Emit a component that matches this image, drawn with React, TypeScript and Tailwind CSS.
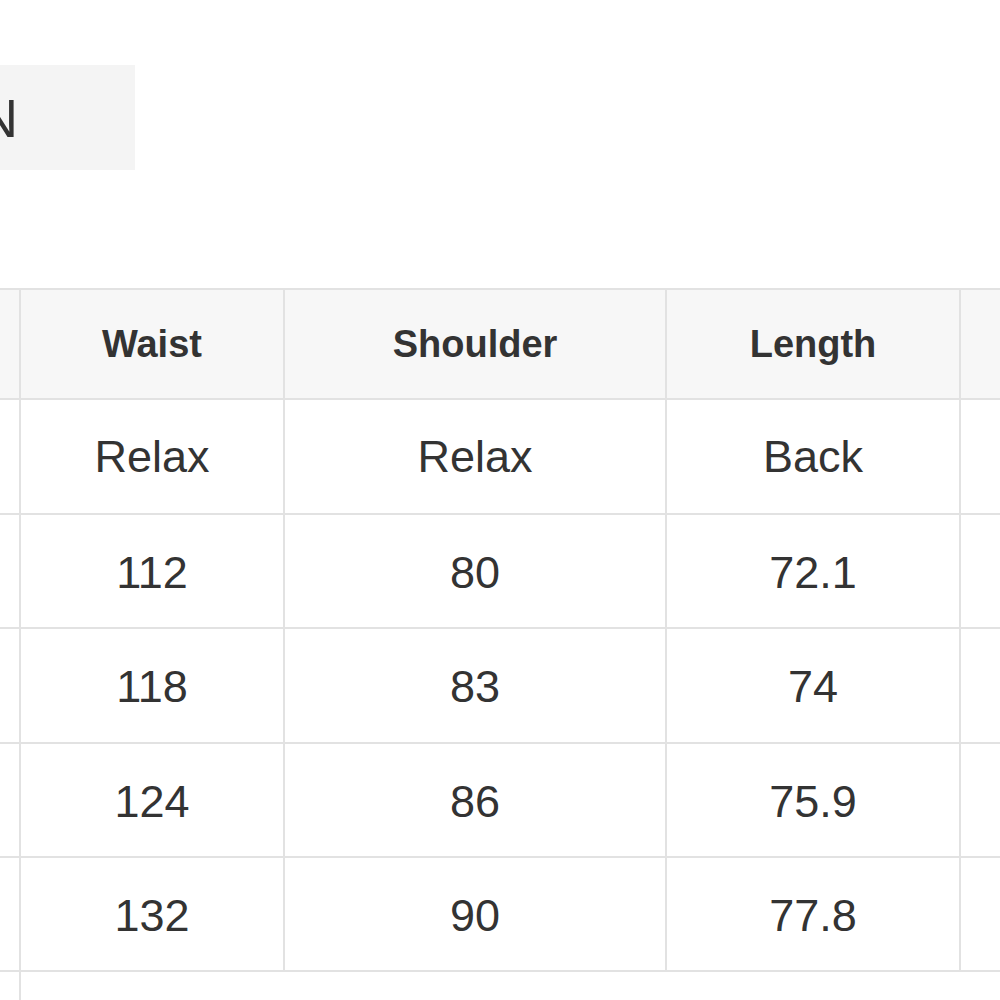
const header = ['Waist', 'Shoulder', 'Length'];
const sub = ['Relax', 'Relax', 'Back'];
const rows = [
  ['112', '80', '72.1'],
  ['118', '83', '74'],
  ['124', '86', '75.9'],
  ['132', '90', '77.8'],
];

export default function App() {
  return (
    <div className="w-[1000px] h-[1000px] overflow-hidden bg-white font-['Liberation_Sans',Arial,sans-serif] text-[#333333]">
      <div className="pt-[65px]">
        <div className="w-[135px] h-[105px] bg-[#f4f4f4] flex items-center text-[54px] leading-none">
          <span className="-ml-[21px]">N</span>
        </div>
      </div>

      {/* size table, cropped: first and last columns lie mostly off screen */}
      <div className="mt-[118px] -ml-[245px] w-max grid grid-cols-[262px_262px_380px_292px_300px] grid-rows-[108px_113px_112px_113px_112px_112px_113px] gap-[2px] p-[2px] bg-[#e2e2e2]">
        <div className="bg-[#f7f7f7]" />
        {header.map((h) => (
          <div key={h} className="bg-[#f7f7f7] flex items-center justify-center text-[38px] font-bold">
            {h}
          </div>
        ))}
        <div className="bg-[#f7f7f7]" />

        <div className="bg-white" />
        {sub.map((s, i) => (
          <div key={i} className="bg-white flex items-center justify-center text-[45px]">
            {s}
          </div>
        ))}
        <div className="bg-white" />

        {rows.map((r, ri) => [
          <div key={'a' + ri} className="bg-white" />,
          ...r.map((c, i) => (
            <div key={ri + '-' + i} className="bg-white flex items-center justify-center text-[45px] pt-[3px]">
              {c}
            </div>
          )),
          <div key={'b' + ri} className="bg-white" />,
        ])}

        <div className="bg-white" />
        <div className="bg-white col-span-4" />
      </div>
    </div>
  );
}
